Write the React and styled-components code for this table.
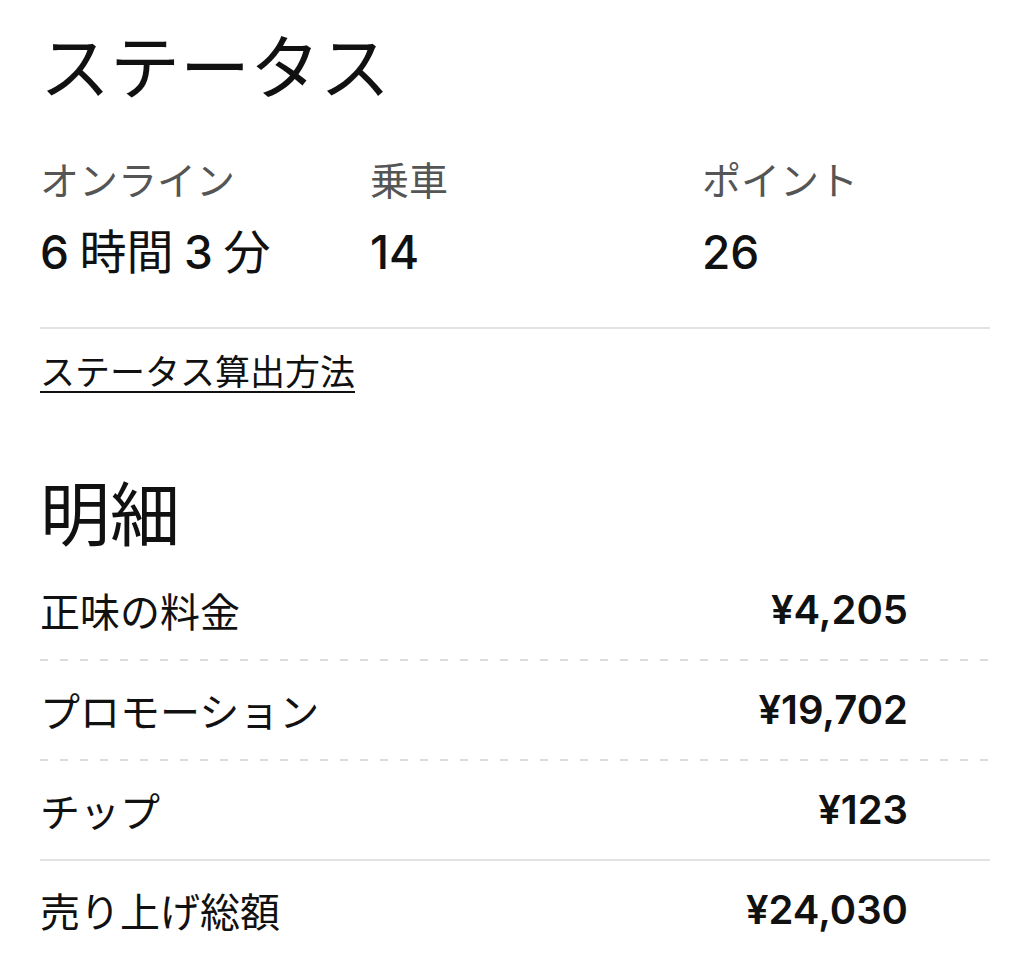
import React from 'react';
import styled, { createGlobalStyle } from 'styled-components';

const GlobalStyle = createGlobalStyle`
  html, body {
    margin: 0;
    padding: 0;
    background: #fff;
  }
  body {
    font-family: "Noto Sans CJK JP", sans-serif;
    color: #111;
  }
`;

const stats = [
  { label: 'オンライン', value: [['6', true], [' 時間 ', false], ['3', true], [' 分', false]] },
  { label: '乗車', value: [['14', true]] },
  { label: 'ポイント', value: [['26', true]] },
];

const rows = [
  { label: '正味の料金', amount: '¥4,205', line: 'dashed' },
  { label: 'プロモーション', amount: '¥19,702', line: 'dashed' },
  { label: 'チップ', amount: '¥123', line: 'solid' },
  { label: '売り上げ総額', amount: '¥24,030', line: 'none' },
];

const App = () => {
  return (
    <>
      <GlobalStyle />
      <Page>
        <Title>ステータス</Title>
        <StatGrid>
          {stats.map((s) => (
            <Stat key={s.label}>
              <StatLabel>{s.label}</StatLabel>
              <StatValue>
                {s.value.map(([text, num], i) =>
                  num ? <Num key={i}>{text}</Num> : <span key={i}>{text}</span>
                )}
              </StatValue>
            </Stat>
          ))}
        </StatGrid>
        <LinkRow>
          <HelpLink href="#">ステータス算出方法</HelpLink>
        </LinkRow>
        <Heading>明細</Heading>
        <List>
          {rows.map((r) => (
            <Row key={r.label} $line={r.line}>
              <RowLabel>{r.label}</RowLabel>
              <Amount>{r.amount}</Amount>
            </Row>
          ))}
        </List>
      </Page>
    </>
  );
};

const Page = styled.div`
  width: 950px;
  padding: 16px 0 0 40px;
`;

const Title = styled.h1`
  margin: 0;
  font-size: 70px;
  line-height: 96px;
  font-weight: 400;
  color: #111;
`;

const StatGrid = styled.div`
  display: grid;
  grid-template-columns: 330px 332px 1fr;
  margin-top: 38px;
  padding-bottom: 46px;
  border-bottom: 2px solid #e2e2e2;
`;

const Stat = styled.div`
  display: flex;
  flex-direction: column;
  gap: 11px;
`;

const StatLabel = styled.div`
  font-size: 39px;
  line-height: 56px;
  height: 56px;
  color: #555;
`;

const StatValue = styled.div`
  font-size: 47px;
  line-height: 64px;
  height: 64px;
  color: #111;
  white-space: pre;
`;

const Num = styled.span`
  font-family: "Inter", "Noto Sans CJK JP", sans-serif;
  font-size: 46px;
  line-height: 1;
  font-weight: 500;
`;

const LinkRow = styled.div`
  margin-top: 16px;
  font-size: 35px;
  line-height: 50px;
  height: 50px;
`;

const HelpLink = styled.a`
  color: #111;
  text-decoration: underline;
  text-decoration-thickness: 2px;
  text-underline-offset: 6px;
`;

const Heading = styled.h2`
  margin: 76px 0 10px;
  font-size: 70px;
  line-height: 80px;
  height: 80px;
  font-weight: 400;
  color: #111;
`;

const List = styled.div`
  display: flex;
  flex-direction: column;
`;

const dashed = `repeating-linear-gradient(to right, #dcdcdc 0 8px, transparent 8px 20px)`;

const Row = styled.div`
  display: flex;
  align-items: center;
  justify-content: space-between;
  height: 100px;
  box-sizing: border-box;
  padding: 0 82px 2px 0;
  line-height: 56px;
  background: ${({ $line }) =>
    $line === 'dashed'
      ? `${dashed} left bottom / 100% 2px no-repeat`
      : $line === 'solid'
      ? 'linear-gradient(#e2e2e2, #e2e2e2) left bottom / 100% 2px no-repeat'
      : 'none'};
`;

const RowLabel = styled.span`
  font-size: 40px;
  color: #111;
`;

const Amount = styled.span`
  font-family: "Inter", "Noto Sans CJK JP", sans-serif;
  font-size: 40px;
  font-weight: 600;
  color: #111;
`;

export default App;
